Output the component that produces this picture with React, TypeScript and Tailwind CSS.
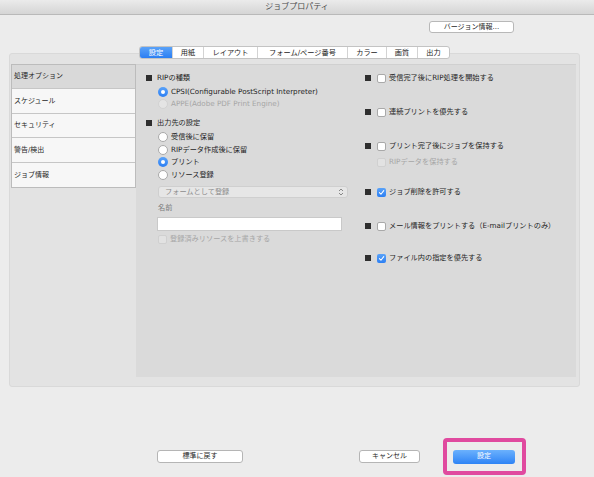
import React from "react";

const FONT = { fontFamily: "'DejaVu Sans', 'Noto Sans CJK JP', sans-serif" };

function Square() {
  return <span className="block w-[6px] h-[6px] bg-[#2e2e2e] shrink-0" />;
}

function Radio({ checked, disabled }: { checked?: boolean; disabled?: boolean }) {
  if (checked) {
    return (
      <span className="flex w-[10px] h-[10px] shrink-0 items-center justify-center rounded-full bg-gradient-to-b from-[#5aa2f8] to-[#2b7ff3]">
        <span className="block w-[4px] h-[4px] rounded-full bg-white" />
      </span>
    );
  }
  return (
    <span
      className={
        "block w-[10px] h-[10px] shrink-0 rounded-full border " +
        (disabled ? "border-[#d2d2d2] bg-[#e4e4e4]" : "border-[#a9a9a9] bg-white")
      }
    />
  );
}

function Check({ checked, disabled }: { checked?: boolean; disabled?: boolean }) {
  if (checked) {
    return (
      <span className="flex w-[9px] h-[9px] shrink-0 items-center justify-center rounded-[2px] bg-gradient-to-b from-[#5aa2f8] to-[#2b7ff3]">
        <svg width="7" height="7" viewBox="0 0 10 10">
          <path d="M2 5.2 L4.2 7.5 L8.2 2.4" fill="none" stroke="#fff" strokeWidth="1.5" strokeLinecap="round" strokeLinejoin="round" />
        </svg>
      </span>
    );
  }
  return (
    <span
      className={
        "block w-[9px] h-[9px] shrink-0 rounded-[2px] border " +
        (disabled ? "border-[#d0d0d0] bg-[#e2e2e2]" : "border-[#a9a9a9] bg-white")
      }
    />
  );
}

const tabs = [
  { label: "設定", w: "w-[32px]" },
  { label: "用紙", w: "w-[31px]" },
  { label: "レイアウト", w: "w-[54px]" },
  { label: "フォーム/ページ番号", w: "w-[90px]" },
  { label: "カラー", w: "w-[39px]" },
  { label: "画質", w: "w-[31px]" },
  { label: "出力", w: "w-[32px]" },
];

const sideItems = ["処理オプション", "スケジュール", "セキュリティ", "警告/検出", "ジョブ情報"];

export default function App() {
  return (
    <div className="w-[594px] h-[477px] overflow-hidden bg-[#ececec] text-[#1f1f1f]" style={FONT}>
      {/* Title bar */}
      <div className="h-[15px] flex items-center justify-center bg-gradient-to-b from-[#ebebeb] to-[#d5d5d5] border-b border-[#b9b9b9] text-[8px] text-[#4a4a4a]">
        ジョブプロパティ
      </div>

      {/* Version button */}
      <div className="flex justify-end pr-[80px] mt-[6px]">
        <button className="w-[85px] h-[12px] flex items-center justify-center rounded-[3px] border border-[#b8b8b8] bg-white text-[7px] leading-none">
          バージョン情報...
        </button>
      </div>

      {/* Tabs + group box */}
      <div className="ml-[9px] mr-[14px] mt-[13px]">
        <div className="relative z-10 flex justify-center">
          <div className="flex h-[13px] rounded-[3px] border border-[#c3c3c3] bg-white overflow-hidden">
            {tabs.map((t, i) => (
              <div
                key={t.label}
                className={
                  t.w +
                  " flex items-center justify-center text-[7.2px] leading-none " +
                  (i === 0
                    ? "bg-gradient-to-b from-[#5aa2f8] to-[#2a7ef3] text-white"
                    : "border-l border-[#d3d3d3] text-[#222]")
                }
              >
                {t.label}
              </div>
            ))}
          </div>
        </div>

        <div className="-mt-[6px] h-[334px] rounded-[3px] border border-[#d9d9d9] bg-[#e3e3e3] pt-[10px] pl-[1px] pr-[3px] pb-[9px] flex">
          {/* Sidebar */}
          <div className="w-[125px] shrink-0 self-start border border-[#bcbcbc] bg-[#f7f7f7]">
            {sideItems.map((s, i) => (
              <div
                key={s}
                className={
                  "h-[24.4px] flex items-center pl-[2px] text-[7px] " +
                  (i === 0 ? "bg-[#d9d9d9] " : "") +
                  (i < sideItems.length - 1 ? "border-b border-[#c6c6c6]" : "")
                }
              >
                {s}
              </div>
            ))}
          </div>

          {/* Main panel */}
          <div className="flex-1 bg-[#dadada] border-t border-[#d0d0d0] pl-[10px] pt-[7px] flex text-[7.2px] leading-[12px]">
            {/* Left column */}
            <div className="w-[219px] shrink-0 flex flex-col">
              <div className="h-[12px] flex items-center gap-[5px]">
                <Square />
                <span>RIPの種類</span>
              </div>
              <div className="ml-[12px] mt-[2px] h-[12px] flex items-center gap-[3px]">
                <Radio checked />
                <span>CPSI(Configurable PostScript Interpreter)</span>
              </div>
              <div className="ml-[12px] h-[12px] flex items-center gap-[3px] text-[#a6a6a6]">
                <Radio disabled />
                <span>APPE(Adobe PDF Print Engine)</span>
              </div>

              <div className="mt-[7px] h-[12px] flex items-center gap-[5px]">
                <Square />
                <span>出力先の設定</span>
              </div>
              <div className="ml-[12px] mt-[2px] h-[12.5px] flex items-center gap-[3px]">
                <Radio />
                <span>受信後に保留</span>
              </div>
              <div className="ml-[12px] h-[12.5px] flex items-center gap-[3px]">
                <Radio />
                <span>RIPデータ作成後に保留</span>
              </div>
              <div className="ml-[12px] h-[12.5px] flex items-center gap-[3px]">
                <Radio checked />
                <span>プリント</span>
              </div>
              <div className="ml-[12px] h-[12.5px] flex items-center gap-[3px]">
                <Radio />
                <span>リソース登録</span>
              </div>

              <div className="ml-[12px] mt-[5px] w-[190px] h-[12px] flex items-center justify-between rounded-[3px] border border-[#cfcfcf] bg-[#e6e6e6] pl-[6px] pr-[3px] text-[#8c8c8c]">
                <span>フォームとして登録</span>
                <svg width="6" height="8" viewBox="0 0 6 8">
                  <path d="M1 3 L3 1 L5 3 M1 5 L3 7 L5 5" fill="none" stroke="#7d7d7d" strokeWidth="0.9" />
                </svg>
              </div>

              <div className="ml-[12px] mt-[4px] h-[12px] flex items-center text-[#7a7a7a]">名前</div>
              <div className="ml-[11px] mt-[3px] w-[185px] h-[14px] border border-[#c9c9c9] bg-white" />
              <div className="ml-[12px] mt-[2px] h-[12px] flex items-center gap-[3px] text-[#a6a6a6]">
                <Check disabled />
                <span>登録済みリソースを上書きする</span>
              </div>
            </div>

            {/* Right column */}
            <div className="flex flex-col">
              <div className="h-[12px] flex items-center">
                <Square />
                <span className="ml-[6px]"><Check /></span>
                <span className="ml-[3px]">受信完了後にRIP処理を開始する</span>
              </div>
              <div className="mt-[22px] h-[12px] flex items-center">
                <Square />
                <span className="ml-[6px]"><Check /></span>
                <span className="ml-[3px]">連続プリントを優先する</span>
              </div>
              <div className="mt-[22px] h-[12px] flex items-center">
                <Square />
                <span className="ml-[6px]"><Check /></span>
                <span className="ml-[3px]">プリント完了後にジョブを保持する</span>
              </div>
              <div className="mt-[4px] h-[12px] flex items-center pl-[12px] text-[#a6a6a6]">
                <Check disabled />
                <span className="ml-[3px]">RIPデータを保持する</span>
              </div>
              <div className="mt-[18px] h-[12px] flex items-center">
                <Square />
                <span className="ml-[6px]"><Check checked /></span>
                <span className="ml-[3px]">ジョブ削除を許可する</span>
              </div>
              <div className="mt-[22px] h-[12px] flex items-center">
                <Square />
                <span className="ml-[6px]"><Check /></span>
                <span className="ml-[3px]">メール情報をプリントする（E-mailプリントのみ）</span>
              </div>
              <div className="mt-[20px] h-[12px] flex items-center">
                <Square />
                <span className="ml-[6px]"><Check checked /></span>
                <span className="ml-[3px]">ファイル内の指定を優先する</span>
              </div>
            </div>
          </div>
        </div>
      </div>

      {/* Bottom buttons */}
      <div className="mt-[51px] flex items-center">
        <button className="ml-[157px] w-[86px] h-[13px] flex items-center justify-center rounded-[3px] border border-[#b5b5b5] bg-white text-[7px] leading-none">
          標準に戻す
        </button>
        <button className="ml-[116px] w-[61px] h-[13px] flex items-center justify-center rounded-[3px] border border-[#b5b5b5] bg-white text-[7px] leading-none">
          キャンセル
        </button>
        <div className="ml-[23px] w-[83px] h-[37px] rounded-[4px] border-[4px] border-[#e04a9f] flex items-center pl-[6px]">
          <button className="w-[62px] h-[14px] flex items-center justify-center rounded-[3px] bg-gradient-to-b from-[#6bb1fd] to-[#2d83f5] text-white text-[7px] leading-none">
            設定
          </button>
        </div>
      </div>
    </div>
  );
}
